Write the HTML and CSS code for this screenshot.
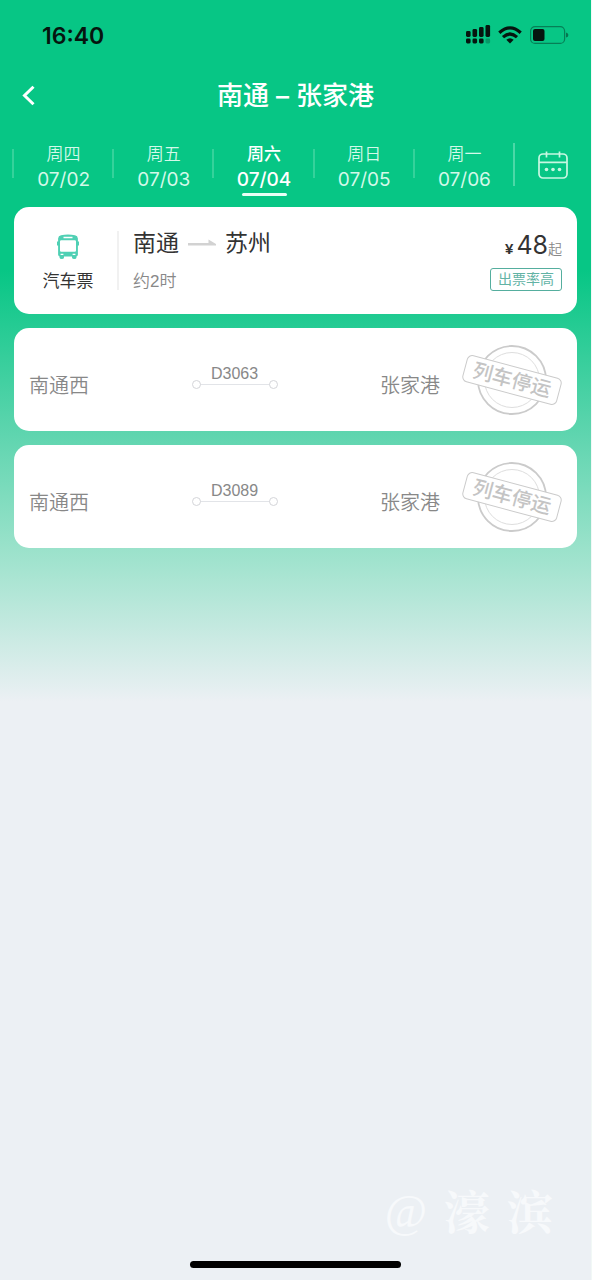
FILE: index.html
```html
<!DOCTYPE html>
<html lang="zh-CN">
<head>
<meta charset="utf-8">
<meta name="viewport" content="width=device-width, initial-scale=1">
<title>南通 – 张家港</title>
<link rel="stylesheet" href="styles.css">
</head>
<body>
<svg class="defs" aria-hidden="true">
  <symbol id="stamp" viewBox="0 0 100 72">
    <circle cx="50" cy="36" r="34" fill="none" stroke="#cbcbcb" stroke-width="1.8"/>
    <circle cx="50" cy="36" r="27.5" fill="none" stroke="#dedede" stroke-width="1"/>
    <g transform="rotate(15 50 36)">
      <rect x="1.5" y="22.5" width="97" height="27" rx="5" fill="#fff" stroke="#cbcbcb" stroke-width="1"/>
      <text class="stamp-text" x="50" y="43" text-anchor="middle">列车停运</text>
    </g>
  </symbol>
</svg>
<div class="screen">
  <div class="status">
    <span class="time">16:40</span>
    <svg class="status-icons" width="103" height="20" viewBox="0 0 103 20" aria-hidden="true">
      <g fill="#06150f">
        <rect x="0" y="6" width="4.600" height="6" rx="1.4"/>
        <rect x="6.5" y="4" width="4.600" height="8" rx="1.4"/>
        <rect x="13" y="2" width="4.600" height="10" rx="1.4"/>
        <rect x="19.5" y="0" width="4.600" height="12" rx="1.4"/>
        <rect x="0" y="13.5" width="4.600" height="5" rx="1.4"/>
        <rect x="6.5" y="13.5" width="4.600" height="5" rx="1.4"/>
        <rect x="13" y="13.5" width="4.600" height="5" rx="1.4"/>
        <rect x="19.5" y="13.5" width="4.600" height="5" rx="1.4" opacity=".25"/>
      </g>
      <g fill="none" stroke="#06150f" stroke-width="3.2">
        <path d="M33.3 7.700Q44 -1.900 54.7 7.700"/>
        <path d="M37 12.100Q44 5.900 51 12.100"/>
      </g>
      <path d="M40.3 14.800Q44 11.700 47.7 14.800L44 18.500Z" fill="#06150f"/>
      <rect x="64.6" y="1.600" width="34" height="16.8" rx="4.5" fill="none" stroke="#06150f" stroke-opacity=".4" stroke-width="1.2"/>
      <rect x="67" y="4" width="11.5" height="12" rx="2" fill="#06150f"/>
      <path d="M100 7.400Q102.4 8 102.4 10T100 12.600Z" fill="#06150f" opacity=".45"/>
    </svg>
  </div>
  <header class="header">
    <button class="back" type="button" aria-label="返回">
      <svg width="14" height="22" viewBox="0 0 14 22"><path d="M11.500 1.700L2.500 10.500l9 8.800" fill="none" stroke="#fff" stroke-width="3"/></svg>
    </button>
    <h1 class="title">南通 – 张家港</h1>
  </header>
  <nav class="dates">
    <button class="date" type="button"><span>周四</span><span class="day">07/02</span></button>
    <button class="date" type="button"><span>周五</span><span class="day">07/03</span></button>
    <button class="date active" type="button" aria-current="date"><span>周六</span><span class="day">07/04</span></button>
    <button class="date" type="button"><span>周日</span><span class="day">07/05</span></button>
    <button class="date" type="button"><span>周一</span><span class="day">07/06</span></button>
    <button class="calendar" type="button" aria-label="日历">
      <svg width="30" height="30" viewBox="0 0 30 30">
        <g fill="none" stroke="#c8f7e2" stroke-width="1.7">
          <rect x="1" y="4" width="28" height="24" rx="4"/>
          <path d="M1 12.4h28M8.5 1.5v6M21.5 1.5v6"/>
        </g>
        <g fill="#c8f7e2"><circle cx="8.5" cy="19.5" r="1.8"/><circle cx="15" cy="19.5" r="1.8"/><circle cx="21.5" cy="19.5" r="1.8"/></g>
      </svg>
    </button>
  </nav>
  <main class="list">
    <article class="card bus">
      <div class="kind">
        <svg width="22" height="26" viewBox="0 0 22 26" aria-hidden="true">
          <path fill="#4fd0b4" fill-rule="evenodd" d="M4 1.200Q11-.2 18 1.200 20.700 1.800 20.900 4.500V7.500H22v4h-1.100V20.500q0 2-2 2H3.100q-2 0-2-2V11.500H0v-4H1.100V4.500Q1.300 1.800 4 1.200ZM6.500 2.700v1.500h9V2.700ZM4.200 6.300q-1.200 0-1.200 1.200v9q0 1.200 1.200 1.200h13.600q1.200 0 1.200-1.200v-9q0-1.200-1.200-1.200ZM3.600 19.700v1.400h2.800v-1.400ZM15.600 19.700v1.400h2.800v-1.400Z"/>
          <path fill="#4fd0b4" d="M2.500 22h4.500v1.500q0 1.500-2.200 1.500t-2.300-1.500ZM15 22h4.500v1.500q0 1.500-2.200 1.500t-2.300-1.500Z"/>
        </svg>
        <span>汽车票</span>
      </div>
      <div class="trip">
        <div class="cities">
          <span>南通</span>
          <svg width="28" height="8" viewBox="0 0 28 8" aria-hidden="true"><path d="M0 4h20.500V.5L28 5v1.500H0Z" fill="#d2d2d2"/></svg>
          <span>苏州</span>
        </div>
        <div class="duration">约2时</div>
      </div>
      <div class="fare">
        <div class="price"><span class="yen">¥</span><span class="amount">48</span><span class="from">起</span></div>
        <span class="tag">出票率高</span>
      </div>
    </article>
    <article class="card train">
      <div class="route">
        <span class="station">南通西</span>
        <div class="track"><span>D3063</span><i class="line"></i></div>
        <span class="station">张家港</span>
      </div>
      <svg class="stamp" width="100" height="72" role="img" aria-label="列车停运"><use href="#stamp"/></svg>
    </article>
    <article class="card train">
      <div class="route">
        <span class="station">南通西</span>
        <div class="track"><span>D3089</span><i class="line"></i></div>
        <span class="station">张家港</span>
      </div>
      <svg class="stamp" width="100" height="72" role="img" aria-label="列车停运"><use href="#stamp"/></svg>
    </article>
  </main>
  <footer class="footer">
    <div class="watermark"><span class="at">@</span><span>濠</span><span>滨</span></div>
    <div class="home"></div>
  </footer>
</div>
</body>
</html>
```
FILE: styles.css
```css
* { box-sizing: border-box; }

body {
  margin: 0;
  font-family: "Liberation Sans", "Noto Sans CJK SC", sans-serif;
  color: #333;
}

button {
  margin: 0;
  padding: 0;
  border: 0;
  background: none;
  color: inherit;
  font: inherit;
}

svg { display: block; }

.defs {
  position: absolute;
  width: 0;
  height: 0;
}

.screen {
  display: flex;
  flex-direction: column;
  min-height: 100vh;
  border-right: 1px solid #f1f8f6;
  background: linear-gradient(#07c685 270px, #5fd5af 435px, #9be2cb 550px, #ecf0f4 702px);
}

.status {
  display: flex;
  align-items: center;
  justify-content: space-between;
  height: 70px;
  padding: 0 22px 0 42px;
}

.time {
  padding-top: 2px;
  color: #06150f;
  font: 600 23px/32px Inter, sans-serif;
}

.header {
  display: grid;
  grid-template-columns: 40px 1fr 40px;
  align-items: center;
  height: 52px;
  padding: 0 9px;
  color: #fff;
}

.back {
  display: grid;
  place-items: center;
  height: 40px;
}

.title {
  margin: 0;
  text-align: center;
  font-size: 26px;
  font-weight: 500;
  line-height: 38px;
  font-family: Inter, "Noto Sans CJK SC", sans-serif;
}

.dates {
  display: flex;
  align-items: center;
  height: 85px;
  padding: 0 0 0 12px;
  color: #d4f9e9;
}

.date {
  position: relative;
  display: flex;
  flex: 1;
  flex-direction: column;
  align-items: center;
  padding: 5px 0 0 3px;
  font-size: 17px;
  font-weight: 350;
  line-height: 25px;
}

.date::before {
  content: "";
  position: absolute;
  left: 0;
  top: 12px;
  width: 2px;
  height: 29px;
  background: #35d29b;
}

.day {
  font-family: Inter, sans-serif;
  font-size: 19px;
  font-weight: 400;
}

.active {
  color: #fff;
  font-weight: 500;
}

.active .day { font-weight: 500; }

.active::after {
  content: "";
  position: absolute;
  bottom: -4px;
  width: 45px;
  height: 3px;
  border-radius: 2px;
  background: #e9fff6;
}

.calendar {
  display: grid;
  place-items: center;
  width: 78px;
  height: 43px;
  border-left: 2px solid #4bd8a7;
}

.list {
  display: flex;
  flex-direction: column;
  gap: 14px;
  padding: 0 14px;
}

.card {
  display: flex;
  align-items: center;
  min-height: 103px;
  padding: 0 15px;
  border-radius: 15px;
  background: #fff;
}

.bus {
  min-height: 107px;
  padding-left: 0;
}

.kind {
  display: flex;
  flex-direction: column;
  align-items: center;
  gap: 14px;
  width: 105px;
  padding: 3px 0 0 5px;
  border-right: 2px solid #f1f1f1;
  font-size: 17px;
  line-height: 16px;
}

.trip {
  flex: 1;
  padding-left: 14px;
}

.cities {
  display: flex;
  align-items: center;
  gap: 9px;
  font-size: 23px;
  line-height: 32px;
}

.duration {
  margin-top: 10px;
  color: #888;
  font-size: 17px;
  font-weight: 350;
  line-height: 26px;
}

.fare {
  display: flex;
  flex-direction: column;
  align-items: flex-end;
}

.price {
  display: flex;
  align-items: baseline;
  line-height: 28px;
}

.yen {
  margin-right: 3px;
  font-size: 15px;
  font-weight: 700;
}

.amount {
  font-family: Inter, sans-serif;
  font-size: 25px;
}

.from {
  color: #888;
  font-size: 14px;
  font-weight: 350;
}

.tag {
  margin-top: 5px;
  padding: 0 7px;
  border: 1px solid #55ae9e;
  border-radius: 3px;
  color: #62b3a5;
  font-size: 14px;
  line-height: 21px;
}

.train { gap: 22px; }

.route {
  display: flex;
  flex: 1;
  align-items: center;
  justify-content: space-between;
  padding-top: 9px;
  color: #888;
}

.station {
  padding-top: 3px;
  font-size: 20px;
  font-weight: 350;
  line-height: 30px;
}

.track {
  display: flex;
  flex-direction: column;
  align-items: center;
  width: 86px;
  padding-bottom: 12px;
  font-size: 16px;
  line-height: 12px;
}

.line {
  display: flex;
  align-items: center;
  justify-content: space-between;
  width: 100%;
  background: linear-gradient(#e2e4e8, #e2e4e8) center / calc(100% - 12px) 1px no-repeat;
}

.line::before,
.line::after {
  content: "";
  width: 7px;
  height: 7px;
  border: 1px solid #d4d5d9;
  border-radius: 50%;
  background: #fff;
}

.stamp-text {
  fill: #c4c4c4;
  font-family: "Noto Sans CJK SC", sans-serif;
  font-size: 20px;
  font-weight: 500;
}

.footer {
  display: flex;
  flex-direction: column;
  align-items: center;
  gap: 15px;
  margin-top: auto;
  padding-bottom: 12px;
}

.watermark {
  display: flex;
  align-items: center;
  align-self: flex-end;
  gap: 17px;
  margin-right: 38px;
  color: #f7f9fb;
  font-family: "Liberation Serif", "Noto Serif CJK SC", "Noto Sans CJK SC", serif;
  font-size: 46px;
  font-weight: 700;
  line-height: 60px;
}

.at {
  padding-bottom: 4px;
  font-weight: 400;
}

.home {
  width: 211px;
  height: 7px;
  border-radius: 4px;
  background: #000;
}
```
